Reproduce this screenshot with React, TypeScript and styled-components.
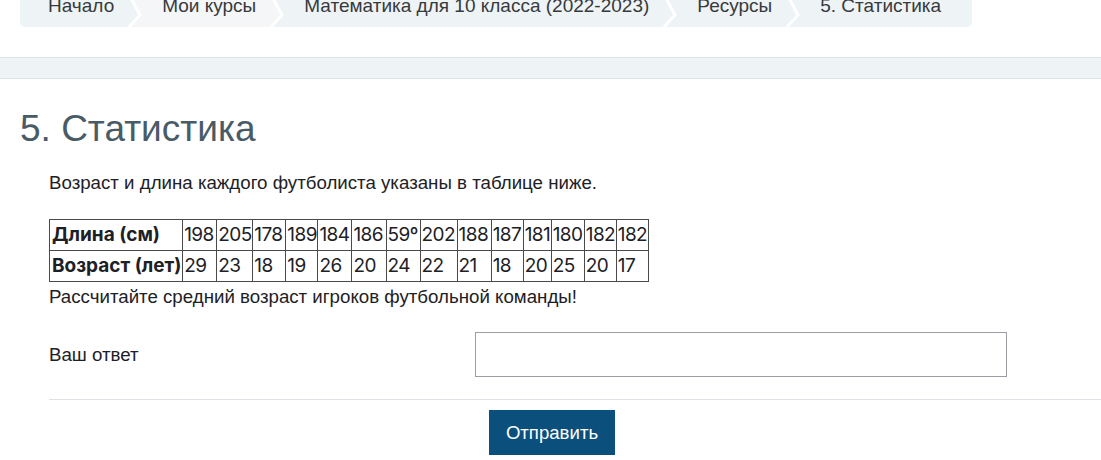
import React from "react";
import styled, { createGlobalStyle } from "styled-components";

const Global = createGlobalStyle`
  html, body { margin: 0; padding: 0; background: #fff; }
  body { font-family: "Liberation Sans", Arial, sans-serif; color: #1d2125; overflow: hidden; }
`;

const Page = styled.div`
  width: 1101px;
  height: 460px;
  overflow: hidden;
`;

const Crumbs = styled.nav`
  margin: -16px 0 0 20px;
  width: 952px;
  height: 43px;
  display: flex;
  align-items: stretch;
  background: #eef3f6;
  border-radius: 0 0 5px 5px;
  overflow: hidden;
`;

const Crumb = styled.div<{ $light?: boolean; $pl?: number }>`
  display: flex;
  align-items: center;
  padding-left: ${(p) => p.$pl ?? 0}px;
  background: ${(p) => (p.$light ? "#f4f6f7" : "transparent")};
  font-size: 19px;
  color: #373a3c;
  white-space: nowrap;
  line-height: 1;
  padding-bottom: 1px;
`;

const SepSvg = styled.svg`
  flex: none;
  display: block;
`;

const LIGHT = "#f4f6f7";
const BASE = "#eef3f6";

const Sep = ({ left = BASE, right = BASE }: { left?: string; right?: string }) => {
  const top = 9.5;
  const apex = 26;
  const apexY = 31;
  const bottom = 15;
  return (
    <SepSvg width={48} height={43} viewBox="0 0 48 43">
      <polygon points={`0,0 ${top},0 ${apex},${apexY} ${bottom},43 0,43`} fill={left} />
      <polygon points={`${top},0 48,0 48,43 ${bottom},43 ${apex},${apexY}`} fill={right} />
      <polyline
        points={`${top},0 ${apex},${apexY} ${bottom},43`}
        fill="none"
        stroke="#ffffff"
        strokeWidth={3}
        strokeLinejoin="miter"
      />
    </SepSvg>
  );
};

const Band = styled.div`
  margin-top: 30px;
  height: 20px;
  background: #eef3f6;
  border-top: 1px solid #dbe4ea;
  border-bottom: 1px solid #dbe4ea;
`;

const Title = styled.h1`
  margin: 28px 0 0 20px;
  font-size: 37px;
  font-weight: 400;
  line-height: 1.2;
  color: #495b67;
`;

const Content = styled.div`
  margin: 20px 0 0 49px;
`;

const Text = styled.p`
  margin: 0;
  font-size: 18.7px;
  line-height: 1.3;
  color: #1d2125;
`;

const DataTable = styled.table`
  margin-top: 23px;
  border-collapse: collapse;
  table-layout: fixed;
  width: 600px;
  font-family: Inter, "Noto Sans", sans-serif;
  font-size: 19px;
  color: #1d2125;
`;

const Col = styled.col<{ $w: number }>`
  width: ${(p) => p.$w}px;
`;

const Cell = styled.td<{ $head?: boolean }>`
  border: 1px solid #4a4a4a;
  height: 31px;
  box-sizing: border-box;
  padding: 0 ${(p) => (p.$head ? "2px" : "1px")};
  font-weight: ${(p) => (p.$head ? 700 : 400)};
  white-space: nowrap;
  overflow: hidden;
  letter-spacing: ${(p) => (p.$head ? "0" : "-0.6px")};
`;

const Question = styled(Text)`
  margin-top: 3px;
`;

const AnswerRow = styled.div`
  margin-top: 23px;
  display: grid;
  grid-template-columns: 426px 532px;
  align-items: center;
`;

const Label = styled.label`
  font-size: 18.7px;
  color: #1d2125;
`;

const Input = styled.input`
  box-sizing: border-box;
  height: 45px;
  width: 532px;
  border: 1px solid #9a9ea3;
  border-radius: 0;
  background: #fff;
  font: inherit;
  padding: 0 10px;
  outline: none;
`;

const Rule = styled.hr`
  margin: 22px 0 0 0;
  border: 0;
  border-top: 1px solid #dee2e6;
`;

const Submit = styled.button`
  display: block;
  margin: 10px 0 0 440px;
  width: 126px;
  height: 45px;
  border: 0;
  border-radius: 0;
  background: #0b4f7c;
  color: #fff;
  font-family: "Liberation Sans", Arial, sans-serif;
  font-size: 18.6px;
  cursor: pointer;
`;

const widths = [133, 34, 36, 33, 32, 34, 34, 34, 37, 34, 32, 28, 33, 32, 32];
const lengths = ["198", "205", "178", "189", "184", "186", "59º", "202", "188", "187", "181", "180", "182", "182"];
const ages = ["29", "23", "18", "19", "26", "20", "24", "22", "21", "18", "20", "25", "20", "17"];

export default function App() {
  return (
    <Page>
      <Global />
      <Crumbs>
        <Crumb $pl={28}>Начало</Crumb>
        <Sep right={LIGHT} />
        <Crumb $light>Мои курсы</Crumb>
        <Sep left={LIGHT} />
        <Crumb>Математика для 10 класса (2022-2023)</Crumb>
        <Sep />
        <Crumb>Ресурсы</Crumb>
        <Sep />
        <Crumb>5. Статистика</Crumb>
      </Crumbs>
      <Band />
      <Title>5. Статистика</Title>
      <Content>
        <Text>Возраст и длина каждого футболиста указаны в таблице ниже.</Text>
        <DataTable>
          <colgroup>
            {widths.map((w, i) => (
              <Col key={i} $w={w} />
            ))}
          </colgroup>
          <tbody>
            <tr>
              <Cell $head>Длина (см)</Cell>
              {lengths.map((v, i) => (
                <Cell key={i}>{v}</Cell>
              ))}
            </tr>
            <tr>
              <Cell $head>Возраст (лет)</Cell>
              {ages.map((v, i) => (
                <Cell key={i}>{v}</Cell>
              ))}
            </tr>
          </tbody>
        </DataTable>
        <Question>Рассчитайте средний возраст игроков футбольной команды!</Question>
        <AnswerRow>
          <Label htmlFor="answer">Ваш ответ</Label>
          <Input id="answer" type="text" />
        </AnswerRow>
        <Rule />
        <Submit type="button">Отправить</Submit>
      </Content>
    </Page>
  );
}
